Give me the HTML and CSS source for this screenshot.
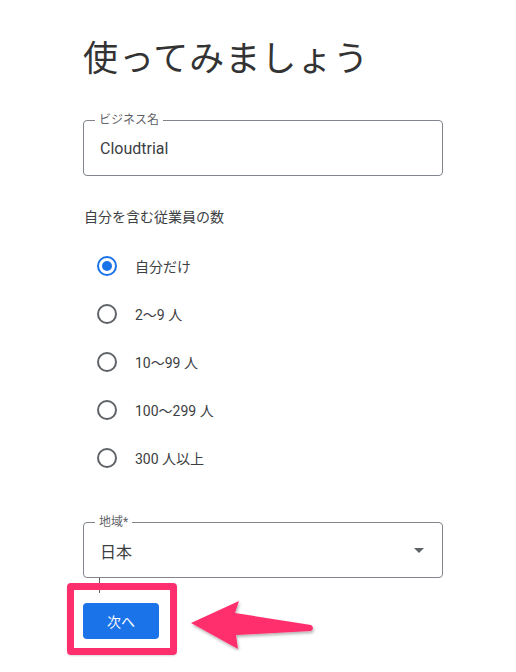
FILE: index.html
```html
<!DOCTYPE html>
<html lang="ja">
<head>
<meta charset="utf-8">
<link rel="stylesheet" href="styles.css">
</head>
<body>
<div class="page">
  <h1 class="title">使ってみましょう</h1>
  <div class="field">
    <span class="field-label">ビジネス名</span>
    <span class="field-value">Cloudtrial</span>
  </div>
  <p class="question">自分を含む従業員の数</p>
  <div class="radios">
    <div class="radio-row"><span class="radio checked"></span><span class="radio-text">自分だけ</span></div>
    <div class="radio-row"><span class="radio"></span><span class="radio-text">2〜9 人</span></div>
    <div class="radio-row"><span class="radio"></span><span class="radio-text">10〜99 人</span></div>
    <div class="radio-row"><span class="radio"></span><span class="radio-text">100〜299 人</span></div>
    <div class="radio-row"><span class="radio"></span><span class="radio-text">300 人以上</span></div>
  </div>
  <div class="field select">
    <span class="field-label">地域*</span>
    <span class="field-value">日本</span>
    <span class="caret"></span>
  </div>
  <div class="tick"></div>
  <div class="action">
    <div class="highlight">
      <button class="next">次へ</button>
    </div>
    <svg class="arrow" width="140" height="70" viewBox="0 0 140 70">
      <defs>
        <filter id="sh" x="-20%" y="-20%" width="140%" height="140%">
          <feDropShadow dx="1" dy="2" stdDeviation="1.5" flood-color="#000" flood-opacity="0.3"/>
        </filter>
      </defs>
      <path d="M6 42 L54 20 L50 32 L126 44 Q130 47 126 50 L51 54 L53 68 Z" fill="#ff2f6d" filter="url(#sh)"/>
    </svg>
  </div>
</div>
</body>
</html>
```
FILE: styles.css
```css
* { box-sizing: border-box; }
html, body { margin: 0; padding: 0; background: #fff; }
body {
  font-family: Roboto, "Noto Sans CJK JP", sans-serif;
  color: #3c4043;
}
.page {
  width: 516px;
  height: 672px;
  padding: 0 0 0 83px;
  position: relative;
  overflow: hidden;
}
.title {
  margin: 0;
  padding-top: 31px;
  font-family: "Noto Sans CJK JP", sans-serif;
  font-weight: 400;
  font-size: 35px;
  line-height: 50px;
  letter-spacing: 1px;
  color: #333;
}
.field {
  position: relative;
  width: 360px;
  height: 56px;
  border: 1px solid #80868b;
  border-radius: 4px;
  display: flex;
  align-items: center;
  padding-left: 16px;
  margin-top: 39px;
}
.field-label {
  position: absolute;
  top: -9px;
  left: 11px;
  padding: 0 4px;
  background: #fff;
  font-family: Roboto, "Noto Sans CJK JP", sans-serif;
  font-size: 12px;
  line-height: 16px;
  color: #5f6368;
}
.field-value {
  font-size: 16px;
  color: #3c4043;
  padding-top: 1px;
}
.question {
  margin: 31px 0 0 1px;
  font-size: 14px;
  line-height: 20px;
  color: #3c4043;
}
.radios {
  margin-top: 15px;
  display: flex;
  flex-direction: column;
}
.radio-row {
  height: 48px;
  display: flex;
  align-items: center;
  padding-left: 14px;
}
.radio {
  width: 20px;
  height: 20px;
  border: 2px solid #5f6368;
  border-radius: 50%;
  display: flex;
  align-items: center;
  justify-content: center;
}
.radio.checked { border-color: #1a73e8; }
.radio.checked::after {
  content: "";
  width: 10px;
  height: 10px;
  border-radius: 50%;
  background: #1a73e8;
}
.radio-text {
  margin-left: 18px;
  font-size: 14px;
  color: #3c4043;
}
.select { margin-top: 40px; }
.select .field-value { font-size: 16px; }
.caret {
  position: absolute;
  right: 18px;
  top: 25px;
  width: 0;
  height: 0;
  border-left: 5px solid transparent;
  border-right: 5px solid transparent;
  border-top: 5px solid #5f6368;
}
.tick {
  width: 1px;
  height: 15px;
  margin-left: 16px;
  background: #5f6368;
}
.action {
  position: relative;
  margin-left: -16px;
  margin-top: -10px;
}
.highlight {
  width: 110px;
  height: 72px;
  border: 7px solid #ff2f6d;
  border-radius: 4px;
  padding: 13px 0 0 9px;
  box-shadow: 0 1px 2px rgba(0,0,0,0.15);
}
.next {
  width: 76px;
  height: 36px;
  border: none;
  border-radius: 4px;
  background: #1a73e8;
  color: #fff;
  font-family: Roboto, "Noto Sans CJK JP", sans-serif;
  font-size: 14px;
  padding: 0;
}
.arrow {
  position: absolute;
  left: 118px;
  top: -2px;
}
```
